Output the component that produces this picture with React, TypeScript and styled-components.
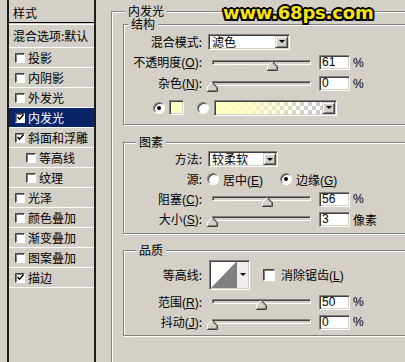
import React from "react";
import styled, { createGlobalStyle } from "styled-components";

const FACE = "#d4d0c8";
const SHADOW = "#808080";
const DARK = "#404040";
const CJK = `"Noto Sans CJK SC", "Liberation Sans", sans-serif`;
const LATIN = `"Liberation Sans", Arial, sans-serif`;

const GlobalStyle = createGlobalStyle`
  html, body { margin: 0; padding: 0; background: ${FACE}; overflow: hidden; }
  body { font-family: ${CJK}; font-size: 12px; color: #000; }
  u { text-decoration-thickness: 1px; text-underline-offset: 1px; }
`;

const Dialog = styled.div`
  position: relative;
  display: flex;
  align-items: flex-start;
  width: 405px;
  height: 362px;
  padding-left: 7px;
  box-sizing: border-box;
  overflow: hidden;
  background: ${FACE};
`;

/* ---------- left style list ---------- */

const StyleList = styled.div`
  flex: none;
  width: 89px;
  height: 362px;
  box-sizing: border-box;
  border-left: 2px solid #1c1c1c;
  border-right: 2px solid #1c1c1c;
  display: flex;
  flex-direction: column;
  overflow: hidden;
`;

const ListHeader = styled.div`
  height: 23px;
  box-sizing: border-box;
  padding: 6px 0 0 4px;
  line-height: 14px;
  border-bottom: 1px solid #000;
`;

const HeaderRule = styled.div`
  height: 2px;
  box-sizing: border-box;
  border-bottom: 1px solid #fff;
`;

const ListItem = styled.div<{ $h?: number; $indent?: number; $selected?: boolean }>`
  display: flex;
  align-items: center;
  gap: 3px;
  height: ${(p) => p.$h ?? 20}px;
  box-sizing: border-box;
  padding-left: ${(p) => p.$indent ?? 6}px;
  border-bottom: 1px solid #fff;
  background: ${(p) => (p.$selected ? "#0a246a" : "transparent")};
  color: ${(p) => (p.$selected ? "#fff" : "#000")};
  white-space: nowrap;
  line-height: 14px;
`;

const Check = styled.span<{ $size: number }>`
  flex: none;
  display: flex;
  align-items: center;
  justify-content: center;
  width: ${(p) => p.$size}px;
  height: ${(p) => p.$size}px;
  box-sizing: border-box;
  background: #fff;
  border: 1px solid;
  border-color: ${DARK} #fff #fff ${DARK};
  box-shadow: inset 1px 1px 0 ${SHADOW};
`;

const CheckMark = () => (
  <svg width="7" height="7" viewBox="0 0 7 7">
    <path d="M0.5 3 L2.5 5.2 L6.5 0.8" fill="none" stroke="#000" strokeWidth="1.5" />
  </svg>
);

/* ---------- right panel ---------- */

const OuterGroup = styled.fieldset`
  flex: none;
  margin: 5px 0 0 15px;
  padding: 1px 0 0 11px;
  width: 330px;
  height: 380px;
  box-sizing: border-box;
  border: 1px solid ${SHADOW};
  box-shadow: inset 1px 1px 0 #fff, 1px 1px 0 #fff;
  min-width: 0;
`;

const Group = styled.fieldset<{ $mt?: number; $pt: number; $pb: number }>`
  margin: ${(p) => p.$mt ?? 0}px 0 0 0;
  padding: ${(p) => p.$pt}px 0 ${(p) => p.$pb}px 0;
  width: 300px;
  box-sizing: border-box;
  border: 1px solid ${SHADOW};
  box-shadow: inset 1px 1px 0 #fff, 1px 1px 0 #fff;
  min-width: 0;
`;

const Legend = styled.legend<{ $x: number }>`
  margin-left: ${(p) => p.$x}px;
  padding: 0 3px;
  height: 12px;
  line-height: 12px;
  background: ${FACE};
`;

const FormRow = styled.div<{ $h: number; $mt?: number }>`
  display: grid;
  grid-template-columns: 79px auto;
  column-gap: 4px;
  align-items: center;
  height: ${(p) => p.$h}px;
  margin-top: ${(p) => p.$mt ?? 0}px;
`;

const Label = styled.span`
  text-align: right;
  padding-right: 1px;
  white-space: nowrap;
  line-height: 14px;
`;

const Controls = styled.div`
  display: flex;
  align-items: center;
  white-space: nowrap;
`;

const sunken = `
  border: 1px solid;
  border-color: ${SHADOW} #fff #fff ${SHADOW};
  box-shadow: inset 1px 1px 0 ${DARK}, inset -1px -1px 0 ${FACE};
`;

const raised = `
  border: 1px solid;
  border-color: ${FACE} ${DARK} ${DARK} ${FACE};
  box-shadow: inset 1px 1px 0 #fff, inset -1px -1px 0 ${SHADOW};
`;

const Select = styled.div<{ $w: number }>`
  display: flex;
  width: ${(p) => p.$w}px;
  height: 16px;
  margin-left: 1px;
  box-sizing: border-box;
  background: #fff;
  padding: 1px;
  ${sunken}
`;

const SelectValue = styled.span`
  flex: 1;
  display: flex;
  align-items: center;
  padding-left: 2px;
  line-height: 12px;
`;

const DropButton = styled.span`
  flex: none;
  width: 13px;
  box-sizing: border-box;
  background: ${FACE};
  display: flex;
  align-items: center;
  justify-content: center;
  ${raised}
`;

const Arrow = styled.span`
  width: 0;
  height: 0;
  border-left: 3px solid transparent;
  border-right: 3px solid transparent;
  border-top: 3px solid #000;
`;

const SliderBox = styled.div`
  position: relative;
  flex: none;
  width: 109px;
  height: 16px;
  padding: 5px 5px 0;
  box-sizing: border-box;
`;

const Track = styled.div`
  height: 5px;
  box-sizing: border-box;
  background: ${FACE};
  border: 1px solid;
  border-color: ${SHADOW} #fff #fff ${SHADOW};
  box-shadow: inset 1px 1px 0 ${DARK};
`;

const Thumb = styled.svg`
  position: absolute;
  top: 6px;
`;

const Slider = ({ value }: { value: number }) => (
  <SliderBox>
    <Track />
    <Thumb width="11" height="10" viewBox="0 0 11 10" style={{ left: value * 0.99 - 0.5 }}>
      <polygon points="5.5,0.5 10,5 10,9.5 0.5,9.5 0.5,5" fill={FACE} />
      <polyline points="0.5,9 0.5,5 5,0.5" fill="none" stroke="#fff" strokeWidth="1" />
      <polyline points="5.5,0.5 10.5,5.5 10.5,9.5 0,9.5" fill="none" stroke={DARK} strokeWidth="1" />
      <polyline points="5.5,1.8 9.5,5.8 9.5,8.5 1,8.5" fill="none" stroke={SHADOW} strokeWidth="1" />
    </Thumb>
  </SliderBox>
);

const NumField = styled.div`
  flex: none;
  width: 31px;
  height: 15px;
  margin-left: 3px;
  box-sizing: border-box;
  background: #fff;
  padding-left: 2px;
  font-family: ${LATIN};
  font-size: 12px;
  line-height: 13px;
  ${sunken}
`;

const Unit = styled.span<{ $cjk?: boolean }>`
  margin-left: 3px;
  font-family: ${(p) => (p.$cjk ? CJK : LATIN)};
  font-size: 12px;
`;

const Radio = styled.span<{ $on?: boolean }>`
  flex: none;
  display: flex;
  align-items: center;
  justify-content: center;
  width: 12px;
  height: 12px;
  box-sizing: border-box;
  border-radius: 50%;
  background: #fff;
  border: 1px solid;
  border-color: ${SHADOW} #fff #fff ${SHADOW};
  box-shadow: inset 1px 1px 0 ${DARK};
  &::after {
    content: "";
    display: ${(p) => (p.$on ? "block" : "none")};
    width: 4px;
    height: 4px;
    border-radius: 50%;
    background: #000;
  }
`;

const RadioOption = styled.span<{ $w?: number }>`
  display: flex;
  align-items: center;
  gap: 4px;
  width: ${(p) => (p.$w ? `${p.$w}px` : "auto")};
`;

const ColorRow = styled.div`
  display: flex;
  align-items: center;
  height: 21px;
  margin-top: 3px;
  padding-left: 29px;
`;

const Swatch = styled.span`
  flex: none;
  width: 15px;
  height: 15px;
  margin: 0 13px 0 4px;
  box-sizing: border-box;
  background: #ffffc0;
  ${sunken}
`;

const GradientPicker = styled.div`
  flex: none;
  display: flex;
  width: 123px;
  height: 16px;
  margin-left: 5px;
  box-sizing: border-box;
  padding: 1px;
  background: #fff;
  ${sunken}
`;

const GradientPreview = styled.span`
  flex: 1;
  background:
    linear-gradient(90deg, #ffffc0 0%, rgba(255, 255, 192, 0.85) 30%, rgba(255, 255, 192, 0) 90%),
    conic-gradient(#cccccc 25%, #ffffff 0 50%, #cccccc 0 75%, #ffffff 0) 0 0 / 8px 8px;
`;

const ContourPicker = styled.div`
  flex: none;
  display: flex;
  width: 41px;
  height: 30px;
  margin-left: 2px;
  box-sizing: border-box;
  padding: 1px;
  background: #fff;
  ${sunken}
`;

const ContourPreview = styled.svg`
  flex: 1;
  display: block;
`;

const ContourDrop = styled.span`
  flex: none;
  width: 11px;
  display: flex;
  align-items: center;
  justify-content: center;
  background: #eeeeee;
  border-left: 1px solid ${SHADOW};
`;

const CheckOption = styled.span`
  display: flex;
  align-items: center;
  gap: 6px;
  margin-left: 13px;
`;

const Watermark = styled.div`
  position: absolute;
  left: 223px;
  top: 1px;
  font-family: "DejaVu Sans", Verdana, sans-serif;
  font-weight: bold;
  font-size: 18px;
  line-height: 24px;
  letter-spacing: -0.2px;
  color: #f6e21a;
  text-shadow:
    -2px 0 #000, 2px 0 #000, 0 -2px #000, 0 2px #000,
    -1.5px -1.5px #000, 1.5px 1.5px #000, -1.5px 1.5px #000, 1.5px -1.5px #000,
    -1px 0 #000, 1px 0 #000, 0 1px #000, 0 -1px #000;
  pointer-events: none;
`;

const Latin = styled.span`
  font-family: ${LATIN};
`;

const listItems: { label: string; indent?: boolean; checked?: boolean; selected?: boolean }[] = [
  { label: "投影" },
  { label: "内阴影" },
  { label: "外发光" },
  { label: "内发光", checked: true, selected: true },
  { label: "斜面和浮雕", checked: true },
  { label: "等高线", indent: true },
  { label: "纹理", indent: true },
  { label: "光泽" },
  { label: "颜色叠加" },
  { label: "渐变叠加" },
  { label: "图案叠加" },
  { label: "描边", checked: true },
];

const Key = ({ k }: { k: string }) => (
  <Latin>
    (<u>{k}</u>)
  </Latin>
);

export default function App() {
  return (
    <>
      <GlobalStyle />
      <Dialog>
        <StyleList>
          <ListHeader>样式</ListHeader>
          <HeaderRule />
          <ListItem $h={23} $indent={4}>
            混合选项:默认
          </ListItem>
          {listItems.map((it) => (
            <ListItem key={it.label} $indent={it.indent ? 17 : 6} $selected={it.selected}>
              <Check $size={10}>{it.checked && <CheckMark />}</Check>
              {it.label}
            </ListItem>
          ))}
        </StyleList>

        <OuterGroup>
          <Legend $x={2}>内发光</Legend>

          <Group $pt={1} $pb={6}>
            <Legend $x={4}>结构</Legend>
            <FormRow $h={21}>
              <Label>混合模式:</Label>
              <Controls>
                <Select $w={82}>
                  <SelectValue>滤色</SelectValue>
                  <DropButton>
                    <Arrow />
                  </DropButton>
                </Select>
              </Controls>
            </FormRow>
            <FormRow $h={21}>
              <Label>
                不透明度<Key k="O" />:
              </Label>
              <Controls>
                <Slider value={61} />
                <NumField>61</NumField>
                <Unit>%</Unit>
              </Controls>
            </FormRow>
            <FormRow $h={21}>
              <Label>
                杂色<Key k="N" />:
              </Label>
              <Controls>
                <Slider value={0} />
                <NumField>0</NumField>
                <Unit>%</Unit>
              </Controls>
            </FormRow>
            <ColorRow>
              <Radio $on />
              <Swatch />
              <Radio />
              <GradientPicker>
                <GradientPreview />
                <DropButton>
                  <Arrow />
                </DropButton>
              </GradientPicker>
            </ColorRow>
          </Group>

          <Group $mt={11} $pt={1} $pb={4}>
            <Legend $x={12}>图素</Legend>
            <FormRow $h={20}>
              <Label>方法:</Label>
              <Controls>
                <Select $w={70}>
                  <SelectValue>较柔软</SelectValue>
                  <DropButton>
                    <Arrow />
                  </DropButton>
                </Select>
              </Controls>
            </FormRow>
            <FormRow $h={20}>
              <Label>源:</Label>
              <Controls>
                <RadioOption $w={73}>
                  <Radio />
                  <span>
                    居中<Key k="E" />
                  </span>
                </RadioOption>
                <RadioOption>
                  <Radio $on />
                  <span>
                    边缘<Key k="G" />
                  </span>
                </RadioOption>
              </Controls>
            </FormRow>
            <FormRow $h={20}>
              <Label>
                阻塞<Key k="C" />:
              </Label>
              <Controls>
                <Slider value={56} />
                <NumField>56</NumField>
                <Unit>%</Unit>
              </Controls>
            </FormRow>
            <FormRow $h={20}>
              <Label>
                大小<Key k="S" />:
              </Label>
              <Controls>
                <Slider value={0} />
                <NumField>3</NumField>
                <Unit $cjk>像素</Unit>
              </Controls>
            </FormRow>
          </Group>

          <Group $mt={10} $pt={1} $pb={3}>
            <Legend $x={12}>品质</Legend>
            <FormRow $h={35}>
              <Label>等高线:</Label>
              <Controls>
                <ContourPicker>
                  <ContourPreview viewBox="0 0 27 26" preserveAspectRatio="none">
                    <polygon points="0,26 27,0 27,26" fill="#808080" />
                  </ContourPreview>
                  <ContourDrop>
                    <Arrow />
                  </ContourDrop>
                </ContourPicker>
                <CheckOption>
                  <Check $size={12} />
                  <span>
                    消除锯齿<Key k="L" />
                  </span>
                </CheckOption>
              </Controls>
            </FormRow>
            <FormRow $h={20}>
              <Label>
                范围<Key k="R" />:
              </Label>
              <Controls>
                <Slider value={50} />
                <NumField>50</NumField>
                <Unit>%</Unit>
              </Controls>
            </FormRow>
            <FormRow $h={20}>
              <Label>
                抖动<Key k="J" />:
              </Label>
              <Controls>
                <Slider value={0} />
                <NumField>0</NumField>
                <Unit>%</Unit>
              </Controls>
            </FormRow>
          </Group>
        </OuterGroup>

        <Watermark>www.68ps.com</Watermark>
      </Dialog>
    </>
  );
}
